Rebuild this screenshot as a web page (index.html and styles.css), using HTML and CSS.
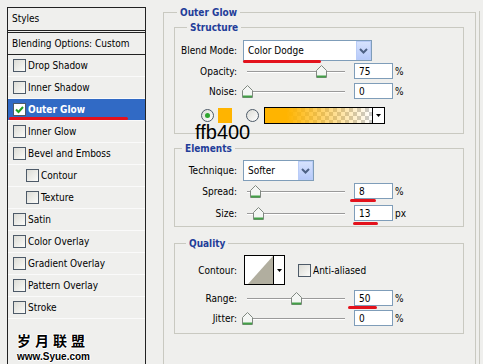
FILE: index.html
```html
<!DOCTYPE html>
<html lang="en">
<head>
    <meta charset="UTF-8">
    <title>Layer Style - Outer Glow</title>
    <link rel="stylesheet" href="styles.css">
</head>
<body>
<div class="dialog">
    <div class="styles">
        <div class="styles-head">Styles</div>
        <div class="styles-blend">Blending Options: Custom</div>
        <ul class="fx-list">
            <li class="fx"><span class="check"></span>Drop Shadow</li>
            <li class="fx"><span class="check"></span>Inner Shadow</li>
            <li class="fx selected">
                <span class="check on">
                    <svg width="11" height="11" viewBox="0 0 11 11"><path d="M2 5.5 L4.5 8 L9 3" fill="none" stroke="#21a121" stroke-width="2"/></svg>
                </span>Outer Glow
                <span class="mark mark-glow"></span>
            </li>
            <li class="fx"><span class="check"></span>Inner Glow</li>
            <li class="fx"><span class="check"></span>Bevel and Emboss</li>
            <li class="fx sub"><span class="check"></span>Contour</li>
            <li class="fx sub"><span class="check"></span>Texture</li>
            <li class="fx"><span class="check"></span>Satin</li>
            <li class="fx"><span class="check"></span>Color Overlay</li>
            <li class="fx"><span class="check"></span>Gradient Overlay</li>
            <li class="fx"><span class="check"></span>Pattern Overlay</li>
            <li class="fx"><span class="check"></span>Stroke</li>
        </ul>
        <div class="watermark">
            <div class="wm-cn">岁月联盟</div>
            <div class="wm-url">www.Syue.com</div>
        </div>
    </div>

    <fieldset class="group outer">
        <legend>Outer Glow</legend>

        <fieldset class="group structure">
            <legend>Structure</legend>
            <div class="row row-blend">
                <span class="lbl">Blend Mode:</span>
                <span class="select select-blend">
                    <span class="select-text">Color Dodge</span>
                    <span class="select-btn"><svg width="15" height="19" viewBox="0 0 15 19"><path d="M4 8 L7.5 11.5 L11 8" fill="none" stroke="#4d6185" stroke-width="2"/></svg></span>
                    <span class="mark mark-blend"></span>
                </span>
            </div>
            <div class="row">
                <span class="lbl">Opacity:</span>
                <span class="slider"><span class="track"><span class="thumb" style="left: 75%"></span></span></span>
                <span class="num">75</span><span class="unit">%</span>
            </div>
            <div class="row">
                <span class="lbl">Noise:</span>
                <span class="slider"><span class="track"><span class="thumb" style="left: 0%"></span></span></span>
                <span class="num">0</span><span class="unit">%</span>
            </div>
            <div class="row row-color">
                <span class="radio on"></span>
                <span class="swatch"></span>
                <span class="radio radio-grad"></span>
                <span class="gradient">
                    <span class="gradient-fill"></span>
                    <span class="gradient-btn"></span>
                </span>
                <span class="hex">ffb400</span>
            </div>
        </fieldset>

        <fieldset class="group elements">
            <legend>Elements</legend>
            <div class="row row-blend">
                <span class="lbl">Technique:</span>
                <span class="select select-tech">
                    <span class="select-text">Softer</span>
                    <span class="select-btn"><svg width="15" height="19" viewBox="0 0 15 19"><path d="M4 8 L7.5 11.5 L11 8" fill="none" stroke="#4d6185" stroke-width="2"/></svg></span>
                </span>
            </div>
            <div class="row">
                <span class="lbl">Spread:</span>
                <span class="slider"><span class="track"><span class="thumb" style="left: 8%"></span></span></span>
                <span class="num">8<span class="mark mark-spread"></span></span><span class="unit">%</span>
            </div>
            <div class="row row-size">
                <span class="lbl">Size:</span>
                <span class="slider"><span class="track"><span class="thumb" style="left: 11%"></span></span></span>
                <span class="num">13<span class="mark mark-size"></span></span><span class="unit">px</span>
            </div>
        </fieldset>

        <fieldset class="group quality">
            <legend>Quality</legend>
            <div class="row row-contour">
                <span class="lbl">Contour:</span>
                <span class="contour">
                    <span class="contour-curve"><svg width="28" height="28" viewBox="0 0 28 28"><polygon points="3,28 28,0 28,28" fill="#b1ae9f"/></svg></span>
                    <span class="contour-btn"></span>
                </span>
                <span class="check check-aa"></span><span class="aa-label">Anti-aliased</span>
            </div>
            <div class="row row-range">
                <span class="lbl">Range:</span>
                <span class="slider"><span class="track"><span class="thumb" style="left: 50%"></span></span></span>
                <span class="num">50<span class="mark mark-range"></span></span><span class="unit">%</span>
            </div>
            <div class="row">
                <span class="lbl">Jitter:</span>
                <span class="slider"><span class="track"><span class="thumb" style="left: 0%"></span></span></span>
                <span class="num">0</span><span class="unit">%</span>
            </div>
        </fieldset>
    </fieldset>
    <div class="edge"></div>
</div>
</body>
</html>
```

FILE: styles.css
```css
body {
    margin: 0;
    background-color: #efefed;
    font-family: 'DejaVu Sans Condensed', 'DejaVu Sans', sans-serif;
    font-stretch: condensed;
    font-size: 10px;
    color: #000;
    overflow: hidden;
}
.dialog {
    display: flex;
    align-items: flex-start;
    height: 357px;
    padding: 7px 0 0 7px;
    overflow: hidden;
}

/* left list of effects */
.styles {
    flex: none;
    width: 137px;
    height: 400px;
    border: 1px solid #222;
    border-bottom: none;
}
.styles-head {
    height: 22px;
    line-height: 22px;
    padding-left: 4px;
    border-bottom: 3px double #222;
}
.styles-blend {
    height: 21px;
    line-height: 21px;
    padding-left: 4px;
    border-bottom: 1px solid #222;
}
.fx-list {
    list-style: none;
    margin: 0;
    padding: 0;
}
.fx {
    position: relative;
    display: flex;
    align-items: center;
    gap: 2px;
    height: 21px;
    padding-left: 5px;
    border-bottom: 1px solid #fafafa;
}
.fx.sub { padding-left: 18px; }
.fx.selected {
    background-color: #316ac5;
    color: #fff;
    font-weight: bold;
}
.check {
    flex: none;
    display: inline-flex;
    align-items: center;
    justify-content: center;
    width: 13px;
    height: 13px;
    box-sizing: border-box;
    border: 1px solid #4d5a68;
    background: linear-gradient(135deg, #dcdcd6, #fbfbf9);
}
.check.on { background: #fff; }

.watermark {
    margin-top: 13px;
    padding-left: 9px;
    color: #000;
    font-weight: bold;
    text-shadow: 1px 0 #fff, -1px 0 #fff, 0 1px #fff, 0 -1px #fff;
}
.wm-cn {
    font-family: 'Noto Sans CJK SC', sans-serif;
    font-size: 14px;
    line-height: 16px;
    letter-spacing: 4px;
}
.wm-url {
    margin-top: 3px;
    font-family: 'Liberation Sans', sans-serif;
    font-stretch: normal;
    font-size: 10px;
    line-height: 12px;
}

/* group boxes */
.group {
    margin: 0;
    padding: 0;
    min-width: 0;
    border: 1px solid #c9c9c1;
}
.group legend {
    padding: 0 3px;
    line-height: 13px;
    font-weight: bold;
    color: #1f3d99;
}
.outer {
    flex: none;
    width: 290px;
    height: 420px;
    margin: -1px 0 0 17px;
    padding: 0 11px 0 10px;
}
.outer > legend { margin-left: 3px; }
.structure {
    position: relative;
    margin-top: 2px;
    padding-bottom: 8px;
}
.structure > legend { margin-left: 12px; }
.elements {
    margin-top: 8px;
    padding-bottom: 3px;
}
.elements > legend { margin-left: 7px; }
.quality {
    margin-top: 10px;
    padding-bottom: 5px;
}
.quality > legend { margin-left: 11px; }
.edge {
    flex: none;
    width: 1px;
    height: 360px;
    margin: 4px 0 0 3px;
    background-color: #c9c9c1;
}

/* rows */
.row {
    display: flex;
    align-items: center;
    height: 20px;
}
.row-blend {
    height: 21px;
    margin-top: 6px;
}
.elements .row-blend { margin-top: 5px; }
.row-size { margin-top: 2px; }
.lbl {
    flex: none;
    width: 62px;
    margin-right: 6px;
    text-align: right;
}
.select {
    position: relative;
    display: flex;
    align-items: center;
    height: 21px;
    box-sizing: border-box;
    border: 1px solid #7f9db9;
    background-color: #fff;
    padding-left: 4px;
}
.select-blend { width: 129px; }
.select-tech { width: 71px; }
.select-text { flex: 1; }
.select-btn {
    display: flex;
    width: 15px;
    height: 19px;
    box-sizing: border-box;
    border: 1px solid #b9ccf7;
    background: linear-gradient(#d6e2fd, #b7cafa);
}
.select-btn svg { margin: -1px; }

.slider {
    flex: none;
    width: 108px;
    height: 13px;
}
.track {
    position: relative;
    display: block;
    width: 98px;
    height: 1px;
    margin: 6px 0 0 4px;
    background-color: #9a9a9a;
    border-bottom: 1px solid #fff;
}
.thumb {
    position: absolute;
    top: -6px;
    width: 11px;
    height: 13px;
    margin-left: -5px;
    background: url("data:image/svg+xml,%3Csvg xmlns='http://www.w3.org/2000/svg' width='11' height='13'%3E%3Cpath d='M0.5 5.5 L5.5 0.5 L10.5 5.5 V12.5 H0.5 Z' fill='%23f4f6f4' stroke='%23808880'/%3E%3Cpath d='M1 11.5 H10' stroke='%2343a047' stroke-width='2'/%3E%3C/svg%3E");
}
.num {
    position: relative;
    flex: none;
    width: 39px;
    height: 16px;
    box-sizing: border-box;
    margin-left: 3px;
    padding-left: 4px;
    line-height: 15px;
    border: 1px solid #7f9db9;
    background-color: #fff;
}
.unit { margin-left: 2px; }

/* color choice */
.row-color {
    position: relative;
    margin-top: 4px;
    padding-left: 26px;
}
.radio {
    flex: none;
    display: inline-flex;
    align-items: center;
    justify-content: center;
    width: 13px;
    height: 13px;
    box-sizing: border-box;
    border: 1px solid #4d5a68;
    border-radius: 50%;
    background: linear-gradient(135deg, #dcdcd6, #fff);
}
.radio.on::after {
    content: "";
    width: 5px;
    height: 5px;
    border-radius: 50%;
    background-color: #2fa52f;
}
.swatch {
    flex: none;
    width: 14px;
    height: 15px;
    margin-left: 4px;
    background-color: #ffb400;
}
.radio-grad { margin-left: 14px; }
.gradient {
    flex: none;
    display: flex;
    width: 121px;
    height: 17px;
    box-sizing: border-box;
    margin-left: 5px;
    border: 1px solid #000;
}
.gradient-fill {
    flex: 1;
    background:
        linear-gradient(to right, #ffb400 0%, #ffb400 20%, rgba(255, 180, 0, 0) 100%),
        repeating-conic-gradient(#cbcbcb 0 25%, #fff 0 50%) 0 0 / 8px 8px;
}
.gradient-btn {
    width: 11px;
    border-left: 1px solid #000;
    background: #fff url("data:image/svg+xml,%3Csvg xmlns='http://www.w3.org/2000/svg' width='5' height='3'%3E%3Cpath d='M0 0 H5 L2.5 3 Z'/%3E%3C/svg%3E") no-repeat center;
}
.hex {
    position: absolute;
    left: 20px;
    top: 17px;
    font-family: 'Liberation Sans', sans-serif;
    font-stretch: normal;
    font-size: 20px;
    line-height: 20px;
}

/* contour */
.row-contour {
    height: 30px;
    margin-top: 5px;
}
.contour {
    flex: none;
    display: flex;
    width: 41px;
    height: 30px;
    box-sizing: border-box;
    margin-left: 1px;
    border: 1px solid #000;
    background-color: #fff;
}
.contour-curve {
    display: flex;
    align-items: flex-end;
    width: 28px;
    border-right: 1px solid #000;
}
.contour-btn {
    flex: 1;
    background: url("data:image/svg+xml,%3Csvg xmlns='http://www.w3.org/2000/svg' width='5' height='3'%3E%3Cpath d='M0 0 H5 L2.5 3 Z'/%3E%3C/svg%3E") no-repeat center;
}
.check-aa { margin-left: 13px; }
.aa-label { margin-left: 2px; }
.row-range { margin-top: 3px; }

/* red annotation strokes */
.mark {
    position: absolute;
    height: 3px;
    border-radius: 2px;
    background-color: #e3121c;
}
.mark-glow { left: 1px; top: 18px; width: 119px; }
.mark-blend { left: -1px; top: 19px; width: 78px; }
.mark-spread { left: -5px; top: 15px; width: 26px; }
.mark-size { left: -2px; top: 16px; width: 25px; }
.mark-range { left: -7px; top: 15px; width: 29px; }
```
